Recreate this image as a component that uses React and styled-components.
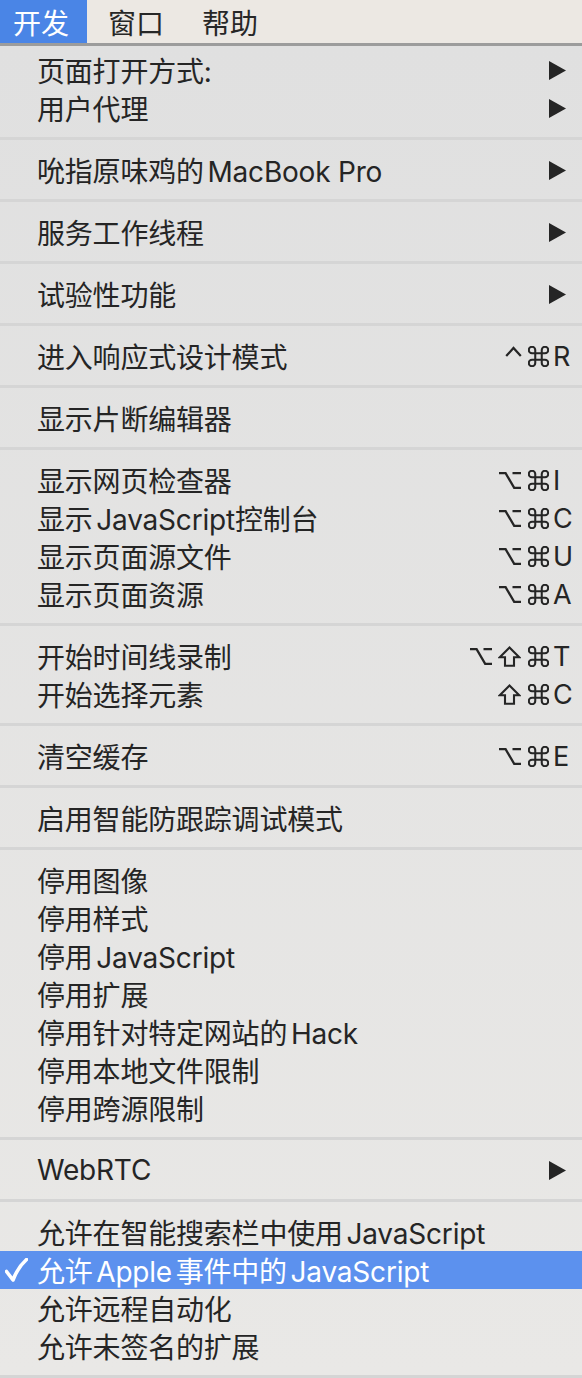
import React from 'react';
import styled, { createGlobalStyle } from 'styled-components';

const GlobalStyle = createGlobalStyle`
  html, body {
    margin: 0;
    padding: 0;
    background: #e4e4e4;
    overflow: hidden;
  }
  body {
    font-family: Inter, "Noto Sans CJK SC", sans-serif;
    -webkit-font-smoothing: antialiased;
  }
`;

const Screen = styled.div`
  width: 582px;
  height: 1378px;
  display: flex;
  flex-direction: column;
`;

const MenuBar = styled.div`
  height: 43px;
  display: flex;
  align-items: stretch;
  background: #ece8e3;
  border-bottom: 3px solid #9c9c9c;
`;

const MenuTitle = styled.div`
  display: flex;
  align-items: center;
  padding: ${(p) => (p.$first ? '0 18px 0 13px' : '0 17px 0 21px')};
  font-size: 28px;
  color: ${(p) => (p.$active ? '#ffffff' : '#272727')};
  background: ${(p) => (p.$active ? '#4a85e6' : 'transparent')};
`;

const Menu = styled.div`
  flex: 1;
  display: flex;
  flex-direction: column;
  padding-top: 5px;
  background: linear-gradient(#e0e0e0, #e9e8e6);
  border-bottom: 3px solid #d5d5d5;
`;

const Row = styled.div`
  height: 38px;
  display: flex;
  align-items: center;
  font-size: 28px;
  color: ${(p) => (p.$active ? '#ffffff' : '#252525')};
  background: ${(p) => (p.$active ? '#5c91ee' : 'transparent')};
`;

const Gutter = styled.span`
  width: 37px;
  flex-shrink: 0;
  display: flex;
  align-items: center;
  padding-left: 5px;
  box-sizing: border-box;
`;

const Label = styled.span`
  flex: 1;
  white-space: nowrap;
  letter-spacing: -0.2px;
  word-spacing: -4px;
`;

const Latin = styled.span`
  word-spacing: 0;
`;

const Shortcut = styled.span`
  display: flex;
  align-items: center;
`;

const Mod = styled.span`
  width: 29px;
  height: 38px;
  display: flex;
  justify-content: center;
  align-items: ${(p) => (p.$top ? 'flex-start' : 'center')};
  padding: ${(p) => (p.$top ? '9px 0 0 8px' : '0')};
  box-sizing: border-box;
`;

const Key = styled.span`
  width: 29px;
  text-align: left;
  font-size: 27px;
`;

const Arrow = styled.svg`
  width: 17px;
  height: 19px;
  margin-right: 16px;
  flex-shrink: 0;
`;

const Separator = styled.div`
  height: 24px;
  display: flex;
  align-items: center;
  &::after {
    content: '';
    display: block;
    width: 100%;
    height: 3px;
    margin-top: -2px;
    background: #d5d5d5;
  }
`;

const stroke = {
  fill: 'none',
  stroke: 'currentColor',
  strokeWidth: 2.3,
  strokeLinecap: 'butt',
  strokeLinejoin: 'miter',
};

const OptionIcon = () => (
  <svg width="22" height="19" viewBox="0 0 22 19">
    <path d="M0 2.2H6.6L15.2 16.8H22M13.5 2.2H22" {...stroke} />
  </svg>
);

const CommandIcon = () => (
  <svg width="21" height="21" viewBox="2.3 2.3 19.4 19.4">
    <path
      d="M15 6v12a3 3 0 1 0 3-3H6a3 3 0 1 0 3 3V6a3 3 0 1 0-3 3h12a3 3 0 1 0-3-3"
      {...stroke}
      strokeWidth={1.9}
      strokeLinejoin="round"
    />
  </svg>
);

const ShiftIcon = () => (
  <svg width="23" height="21" viewBox="0 0 23 21">
    <path d="M11.5 1.6L21.2 11.2H16V19.8H7V11.2H1.8Z" {...stroke} strokeWidth={2.1} />
  </svg>
);

const ControlIcon = () => (
  <svg width="17" height="11" viewBox="0 0 17 11">
    <path d="M1.2 10L8.5 2L15.8 10" {...stroke} strokeWidth={2.2} />
  </svg>
);

const CheckIcon = () => (
  <svg width="23" height="24" viewBox="0 0 23 24">
    <path
      d="M1.5 13.5L8 22C11 14 15.5 7 21.5 1.5"
      fill="none"
      stroke="currentColor"
      strokeWidth="3.6"
      strokeLinecap="round"
      strokeLinejoin="round"
    />
  </svg>
);

const modIcons = {
  alt: <OptionIcon />,
  cmd: <CommandIcon />,
  shift: <ShiftIcon />,
  ctrl: <ControlIcon />,
};

const groups = [
  [
    { label: '页面打开方式:', sub: true },
    { label: '用户代理', sub: true },
  ],
  [{ label: '吮指原味鸡的 ', latin: 'MacBook Pro', sub: true }],
  [{ label: '服务工作线程', sub: true }],
  [{ label: '试验性功能', sub: true }],
  [{ label: '进入响应式设计模式', keys: ['ctrl', 'cmd'], key: 'R' }],
  [{ label: '显示片断编辑器' }],
  [
    { label: '显示网页检查器', keys: ['alt', 'cmd'], key: 'I' },
    { label: '显示 JavaScript控制台', keys: ['alt', 'cmd'], key: 'C' },
    { label: '显示页面源文件', keys: ['alt', 'cmd'], key: 'U' },
    { label: '显示页面资源', keys: ['alt', 'cmd'], key: 'A' },
  ],
  [
    { label: '开始时间线录制', keys: ['alt', 'shift', 'cmd'], key: 'T' },
    { label: '开始选择元素', keys: ['shift', 'cmd'], key: 'C' },
  ],
  [{ label: '清空缓存', keys: ['alt', 'cmd'], key: 'E' }],
  [{ label: '启用智能防跟踪调试模式' }],
  [
    { label: '停用图像' },
    { label: '停用样式' },
    { label: '停用 JavaScript' },
    { label: '停用扩展' },
    { label: '停用针对特定网站的 Hack' },
    { label: '停用本地文件限制' },
    { label: '停用跨源限制' },
  ],
  [{ label: 'WebRTC', sub: true }],
  [
    { label: '允许在智能搜索栏中使用 JavaScript' },
    { label: '允许 Apple 事件中的 JavaScript', checked: true, active: true },
    { label: '允许远程自动化' },
    { label: '允许未签名的扩展' },
  ],
];

const MenuItem = ({ item }) => (
  <Row $active={item.active}>
    <Gutter>{item.checked && <CheckIcon />}</Gutter>
    <Label>
      {item.label}
      {item.latin && <Latin>{item.latin}</Latin>}
    </Label>
    {item.keys && (
      <Shortcut>
        {item.keys.map((k, i) => (
          <Mod key={i} $top={k === 'ctrl'}>{modIcons[k]}</Mod>
        ))}
        <Key>{item.key}</Key>
      </Shortcut>
    )}
    {item.sub && (
      <Arrow viewBox="0 0 17 19">
        <polygon points="0,0 17,9.5 0,19" fill="currentColor" />
      </Arrow>
    )}
  </Row>
);

export default function App() {
  return (
    <Screen>
      <GlobalStyle />
      <MenuBar>
        <MenuTitle $first $active>开发</MenuTitle>
        <MenuTitle>窗口</MenuTitle>
        <MenuTitle>帮助</MenuTitle>
      </MenuBar>
      <Menu>
        {groups.map((group, gi) => (
          <React.Fragment key={gi}>
            {gi > 0 && <Separator />}
            {group.map((item, ii) => (
              <MenuItem key={ii} item={item} />
            ))}
          </React.Fragment>
        ))}
      </Menu>
    </Screen>
  );
}
